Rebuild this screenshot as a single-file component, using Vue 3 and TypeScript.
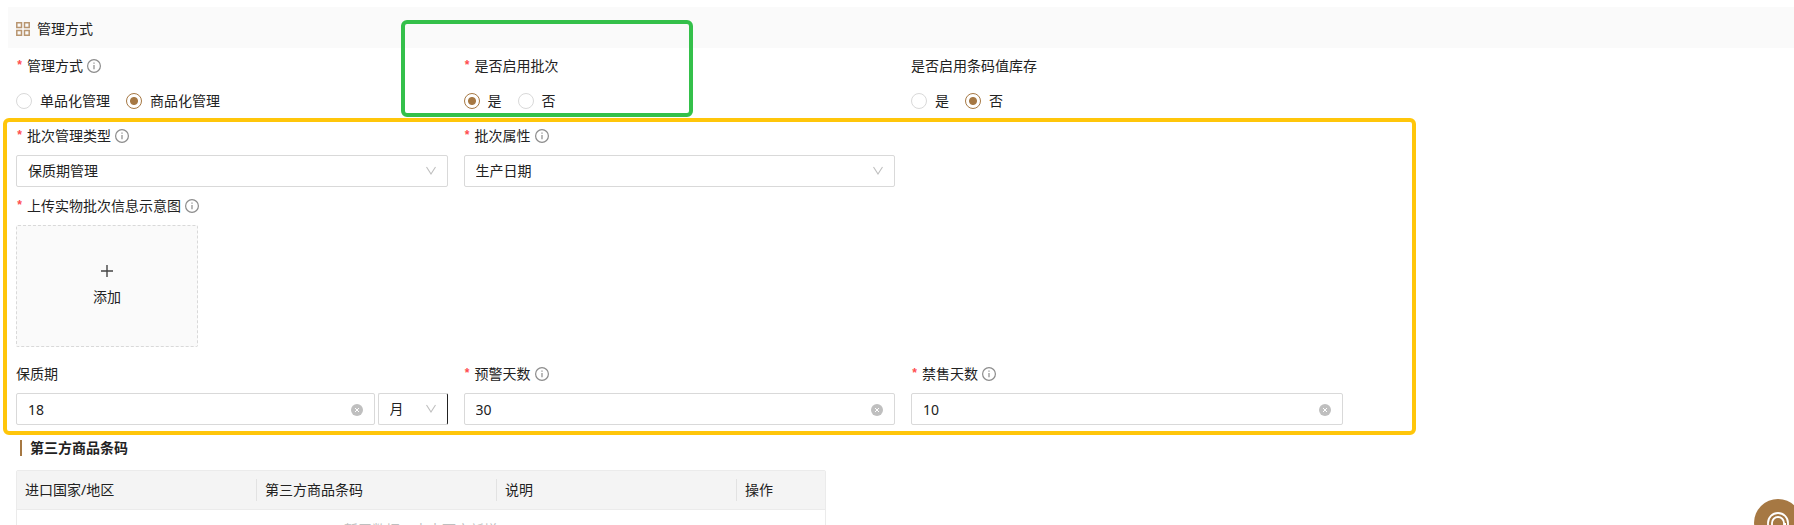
<script setup lang="ts">
import { ref } from 'vue'

const manageMode = ref('goods')
const batchEnabled = ref('yes')
const barcodeStock = ref('no')
const batchType = ref('保质期管理')
const batchAttr = ref('生产日期')
const shelfLife = ref('18')
const unit = ref('月')
const warnDays = ref('30')
const banDays = ref('10')

const columns = ['进口国家/地区', '第三方商品条码', '说明', '操作']
</script>

<template>
  <main class="page">
    <header class="section-head">
      <svg class="grid-icon" viewBox="0 0 14 14" aria-hidden="true">
        <path d="M.8 .8h4.700v4.700H.8zM8.500 .8h4.700v4.700H8.500zM.8 8.500h4.700v4.700H.8zM8.500 8.500h4.700v4.700H8.500z" />
      </svg>
      <h1>管理方式</h1>
    </header>

    <form class="form" @submit.prevent>
      <div class="row">
        <fieldset class="item">
          <legend class="label">
            <span class="star">*</span>管理方式
            <svg class="info" viewBox="0 0 14 14" aria-hidden="true"><circle cx="7" cy="7" r="6.4" /><path d="M7 6v4.200M7 3.600v1.200" /></svg>
          </legend>
          <div class="radios">
            <label><input v-model="manageMode" type="radio" name="mode" value="single" />单品化管理</label>
            <label><input v-model="manageMode" type="radio" name="mode" value="goods" />商品化管理</label>
          </div>
        </fieldset>
        <div class="marked">
          <fieldset class="item">
            <legend class="label"><span class="star">*</span>是否启用批次</legend>
            <div class="radios">
              <label><input v-model="batchEnabled" type="radio" name="batch" value="yes" />是</label>
              <label><input v-model="batchEnabled" type="radio" name="batch" value="no" />否</label>
            </div>
          </fieldset>
          <div class="mark mark-green"></div>
        </div>
        <fieldset class="item">
          <legend class="label">是否启用条码值库存</legend>
          <div class="radios">
            <label><input v-model="barcodeStock" type="radio" name="stock" value="yes" />是</label>
            <label><input v-model="barcodeStock" type="radio" name="stock" value="no" />否</label>
          </div>
        </fieldset>
      </div>

      <div class="batch">
        <div class="row">
          <div class="item">
            <label class="label" for="batch-type">
              <span class="star">*</span>批次管理类型
              <svg class="info" viewBox="0 0 14 14" aria-hidden="true"><circle cx="7" cy="7" r="6.4" /><path d="M7 6v4.200M7 3.600v1.200" /></svg>
            </label>
            <div class="control">
              <select id="batch-type" v-model="batchType"><option>保质期管理</option></select>
              <svg class="caret" viewBox="0 0 10 10" aria-hidden="true"><path d="M.5 1l4.500 7 4.500-7" /></svg>
            </div>
          </div>
          <div class="item">
            <label class="label" for="batch-attr">
              <span class="star">*</span>批次属性
              <svg class="info" viewBox="0 0 14 14" aria-hidden="true"><circle cx="7" cy="7" r="6.4" /><path d="M7 6v4.200M7 3.600v1.200" /></svg>
            </label>
            <div class="control">
              <select id="batch-attr" v-model="batchAttr"><option>生产日期</option></select>
              <svg class="caret" viewBox="0 0 10 10" aria-hidden="true"><path d="M.5 1l4.500 7 4.500-7" /></svg>
            </div>
          </div>
        </div>

        <div class="upload-item">
          <div id="upload-label" class="label">
            <span class="star">*</span>上传实物批次信息示意图
            <svg class="info" viewBox="0 0 14 14" aria-hidden="true"><circle cx="7" cy="7" r="6.4" /><path d="M7 6v4.200M7 3.600v1.200" /></svg>
          </div>
          <button class="upload" type="button" aria-describedby="upload-label">
            <svg viewBox="0 0 14 14" aria-hidden="true"><path d="M7 1v12M1 7h12" /></svg>
            <span>添加</span>
          </button>
        </div>

        <div class="row">
          <div class="item">
            <label class="label" for="shelf">保质期</label>
            <div class="pair">
              <div class="control">
                <input id="shelf" v-model="shelfLife" type="text" />
                <button class="clear" type="button" aria-label="清除" @click="shelfLife = ''">
                  <svg viewBox="0 0 12 12"><circle cx="6" cy="6" r="6" /><path d="M4 4l4 4M8 4l-4 4" /></svg>
                </button>
              </div>
              <div class="control unit">
                <select v-model="unit" aria-label="单位"><option>月</option></select>
                <svg class="caret" viewBox="0 0 10 10" aria-hidden="true"><path d="M.5 1l4.500 7 4.500-7" /></svg>
              </div>
            </div>
          </div>
          <div class="item">
            <label class="label" for="warn">
              <span class="star">*</span>预警天数
              <svg class="info" viewBox="0 0 14 14" aria-hidden="true"><circle cx="7" cy="7" r="6.4" /><path d="M7 6v4.200M7 3.600v1.200" /></svg>
            </label>
            <div class="control">
              <input id="warn" v-model="warnDays" type="text" />
              <button class="clear" type="button" aria-label="清除" @click="warnDays = ''">
                <svg viewBox="0 0 12 12"><circle cx="6" cy="6" r="6" /><path d="M4 4l4 4M8 4l-4 4" /></svg>
              </button>
            </div>
          </div>
          <div class="item">
            <label class="label" for="ban">
              <span class="star">*</span>禁售天数
              <svg class="info" viewBox="0 0 14 14" aria-hidden="true"><circle cx="7" cy="7" r="6.4" /><path d="M7 6v4.200M7 3.600v1.200" /></svg>
            </label>
            <div class="control">
              <input id="ban" v-model="banDays" type="text" />
              <button class="clear" type="button" aria-label="清除" @click="banDays = ''">
                <svg viewBox="0 0 12 12"><circle cx="6" cy="6" r="6" /><path d="M4 4l4 4M8 4l-4 4" /></svg>
              </button>
            </div>
          </div>
        </div>
        <div class="mark mark-yellow"></div>
      </div>

      <h2 class="sub-title">第三方商品条码</h2>
      <table class="codes">
        <thead>
          <tr><th v-for="name in columns" :key="name" scope="col"><span>{{ name }}</span></th></tr>
        </thead>
        <tbody>
          <tr><td colspan="4">暂无数据，点击下方新增</td></tr>
        </tbody>
      </table>
    </form>

    <button class="fab" type="button" aria-label="客服">
      <svg viewBox="0 0 24 24" aria-hidden="true">
        <path d="M2 16v-4a10 10 0 0 1 20 0v4" />
        <path d="M6 18v-6a6 6 0 0 1 12 0v1h2" />
      </svg>
    </button>
  </main>
</template>

<style>
body {
  background: #fff;
}
</style>

<style scoped>
* {
  box-sizing: border-box;
}
.page {
  height: 100vh;
  overflow: hidden;
  padding: 7px 0 0 8px;
  color: #222;
  font: 14px/22px "Noto Sans", "Noto Sans CJK SC", sans-serif;
}
.section-head {
  display: flex;
  align-items: center;
  gap: 7px;
  height: 41px;
  padding: 2px 8px 0;
  background: #fafafa;
}
h1,
h2 {
  margin: 0;
  font-size: 14px;
  font-weight: 400;
}
.grid-icon {
  width: 14px;
  height: 14px;
  fill: none;
  stroke: #b8956f;
  stroke-width: 1.5;
}
.form {
  padding: 7px 4px 0 8px;
}
.row {
  display: grid;
  grid-template-columns: repeat(4, minmax(0, 1fr));
  gap: 16px;
}
.item {
  min-width: 0;
  margin: 0 0 8px;
  padding: 0;
  border: 0;
}
.label {
  display: flex;
  align-items: center;
  width: fit-content;
  height: 22px;
  margin-bottom: 8px;
  padding: 0;
}
.star {
  width: 7px;
  margin-right: 4px;
  color: #ff4d4f;
  font-family: "Liberation Mono", monospace;
  font-size: 12px;
  font-weight: 700;
}
.info {
  width: 14px;
  height: 14px;
  margin-left: 4px;
  fill: none;
  stroke: #8c8c8c;
  stroke-width: 1.2;
}
.radios {
  display: flex;
  align-items: center;
  gap: 16px;
  height: 32px;
}
.radios label {
  display: flex;
  align-items: center;
  gap: 8px;
}
.radios input {
  appearance: none;
  width: 16px;
  height: 16px;
  margin: 0;
  border: 1px solid #d9d9d9;
  border-radius: 50%;
  background: #fff;
}
.radios input:checked {
  border-color: #a67843;
  background: radial-gradient(circle, #a67843 0 3.500px, #fff 4.500px);
}
.control {
  display: flex;
  align-items: center;
  flex: 1;
  min-width: 0;
  height: 32px;
  padding-right: 11px;
  border: 1px solid #d9d9d9;
  border-radius: 2px;
  background: #fff;
}
.control input,
.control select {
  appearance: none;
  flex: 1;
  min-width: 0;
  height: 30px;
  padding: 0 0 0 11px;
  border: 0;
  outline: 0;
  background: transparent;
  color: inherit;
  font: inherit;
}
.caret {
  flex: none;
  width: 10px;
  height: 10px;
  fill: none;
  stroke: #bfbfbf;
  stroke-width: 1.1;
}
.clear {
  flex: none;
  display: flex;
  padding: 2px 0 0;
  border: 0;
  background: none;
}
.clear svg {
  width: 12px;
  height: 12px;
  fill: #bfbfbf;
  stroke: #fff;
}
.clear circle {
  stroke: none;
}
.pair {
  display: flex;
  gap: 3px;
}
.control.unit {
  flex: 0 0 70px;
  border-right-color: #222;
}
.upload-item {
  margin-bottom: 16px;
}
.upload {
  display: flex;
  flex-direction: column;
  align-items: center;
  justify-content: center;
  gap: 8px;
  width: 182px;
  height: 122px;
  padding: 0;
  border: 1px dashed #d9d9d9;
  border-radius: 2px;
  background: #fafafa;
  color: inherit;
  font: inherit;
}
.upload svg {
  width: 14px;
  height: 14px;
  stroke: #444;
  stroke-width: 1.4;
}
.batch,
.marked {
  position: relative;
}
.mark {
  position: absolute;
  border: 4px solid;
  border-radius: 6px;
  pointer-events: none;
}
.mark-green {
  top: -35px;
  bottom: 8px;
  left: -63px;
  width: 292px;
  border-color: #34c04a;
}
.mark-yellow {
  top: -7px;
  bottom: -2px;
  left: -13px;
  width: calc(80% - 6px);
  border-color: #ffc60a;
}
.sub-title {
  display: flex;
  align-items: center;
  gap: 8px;
  margin: 4px 0 11px 4px;
  font-weight: 700;
}
.sub-title::before {
  content: "";
  width: 2px;
  height: 16px;
  background: #a67843;
}
.codes {
  width: 810px;
  max-width: 100%;
  table-layout: fixed;
  border: 1px solid #ebebeb;
  border-radius: 2px;
  border-spacing: 0;
}
.codes th {
  width: 240px;
  height: 39px;
  padding: 0;
  border-bottom: 1px solid #ebebeb;
  background: #f4f4f4;
  font-weight: 400;
  text-align: left;
}
.codes th:first-child {
  width: 239px;
}
.codes th:last-child {
  width: auto;
}
.codes th span {
  display: block;
  padding-left: 8px;
}
.codes th + th span {
  border-left: 1px solid #e2e2e2;
}
.codes td {
  height: 40px;
  padding: 0;
  color: #bfbfbf;
  text-align: center;
}
.fab {
  position: fixed;
  right: -8px;
  bottom: -22px;
  display: grid;
  place-items: center;
  width: 48px;
  height: 48px;
  padding: 0;
  border: 0;
  border-radius: 50%;
  background: #a67843;
}
.fab svg {
  width: 24px;
  height: 24px;
  fill: none;
  stroke: #fff;
  stroke-width: 1.8;
}
</style>
